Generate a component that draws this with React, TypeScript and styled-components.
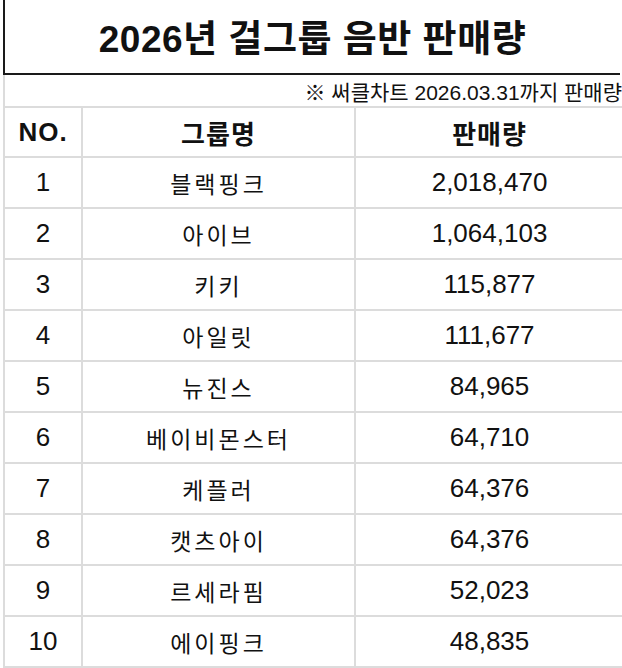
import styled, { createGlobalStyle } from 'styled-components'

const GlobalStyle = createGlobalStyle`
  html, body {
    margin: 0;
    padding: 0;
    background: #fff;
    overflow: hidden;
  }
  body {
    font-family: "Liberation Sans", "Noto Sans CJK KR", sans-serif;
    color: #111;
  }
`

const Page = styled.div`
  width: 640px;
  padding-left: 3px;
`

const TitleBox = styled.div`
  box-sizing: border-box;
  width: 617px;
  height: 75px;
  padding-bottom: 2px;
  border-left: 2px solid #1a1a1a;
  border-bottom: 2px solid #1a1a1a;
  display: flex;
  align-items: center;
  justify-content: center;
`

const Title = styled.h1`
  margin: 0;
  font-size: 37px;
  font-weight: 700;
  letter-spacing: 0.5px;
  font-family: "Liberation Sans", "Noto Sans CJK KR", sans-serif;
`

const Table = styled.table`
  width: 620px;
  border-collapse: collapse;
  table-layout: fixed;
`

const NoteCell = styled.td`
  height: 31px;
  padding: 0 2px 0 0;
  text-align: right;
  font-size: 21px;
  border-left: 2px solid #dcdcdc;
  border-bottom: 2px solid #dcdcdc;
  white-space: nowrap;
`

const Cell = styled.td<{ $head?: boolean; $kr?: boolean }>`
  height: ${({ $head }) => ($head ? 48 : 49)}px;
  padding: 0;
  text-align: center;
  border: 2px solid #dcdcdc;
  font-size: ${({ $head, $kr }) => ($kr ? 23 : 26)}px;
  font-weight: ${({ $head }) => ($head ? 700 : 400)};
  letter-spacing: ${({ $kr, $head }) => ($head ? 1 : $kr ? 3 : 0)}px;
  font-family: ${({ $kr }) =>
    $kr ? '"Noto Sans CJK KR", sans-serif' : '"Liberation Sans", "Noto Sans CJK KR", sans-serif'};
`

const rows = [
  ['1', '블랙핑크', '2,018,470'],
  ['2', '아이브', '1,064,103'],
  ['3', '키키', '115,877'],
  ['4', '아일릿', '111,677'],
  ['5', '뉴진스', '84,965'],
  ['6', '베이비몬스터', '64,710'],
  ['7', '케플러', '64,376'],
  ['8', '캣츠아이', '64,376'],
  ['9', '르세라핌', '52,023'],
  ['10', '에이핑크', '48,835'],
]

export default function App() {
  return (
    <Page>
      <GlobalStyle />
      <TitleBox>
        <Title>2026년 걸그룹 음반 판매량</Title>
      </TitleBox>
      <Table>
        <colgroup>
          <col style={{ width: 78 }} />
          <col style={{ width: 273 }} />
          <col style={{ width: 269 }} />
        </colgroup>
        <tbody>
          <tr>
            <NoteCell colSpan={3}>※ 써클차트 2026.03.31까지 판매량</NoteCell>
          </tr>
          <tr>
            <Cell $head>NO.</Cell>
            <Cell $head>그룹명</Cell>
            <Cell $head>판매량</Cell>
          </tr>
          {rows.map(([no, name, sales]) => (
            <tr key={no}>
              <Cell>{no}</Cell>
              <Cell $kr>{name}</Cell>
              <Cell>{sales}</Cell>
            </tr>
          ))}
        </tbody>
      </Table>
    </Page>
  )
}
